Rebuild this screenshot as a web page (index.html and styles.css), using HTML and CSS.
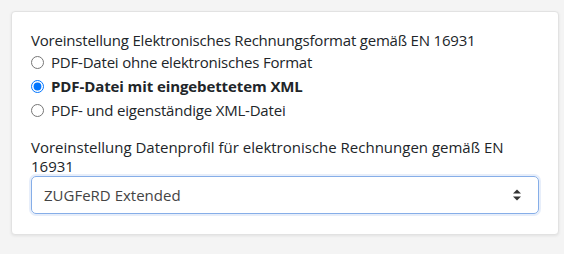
FILE: index.html
```html
<!DOCTYPE html>
<html>
<head>
   <meta http-equiv="Content-Type" content="text/html; charset=UTF-8" />
   <link rel="stylesheet" href="styles.css">
</head>
<body>

<div class="card">
    <div class="group format">
        <div class="label">Voreinstellung Elektronisches Rechnungsformat gemäß EN 16931</div>
        <label class="radio"><input type="radio" name="format"> PDF-Datei ohne elektronisches Format</label>
        <label class="radio checked"><input type="radio" name="format" checked> PDF-Datei mit eingebettetem XML</label>
        <label class="radio"><input type="radio" name="format"> PDF- und eigenständige XML-Datei</label>
    </div>

    <div class="group">
        <div class="label">Voreinstellung Datenprofil für elektronische Rechnungen gemäß EN 16931</div>
        <div class="select">
            <span>ZUGFeRD Extended</span>
            <svg width="10" height="14" viewBox="0 0 10 14">
                <path d="M1 5.5 L5 1.5 L9 5.5 Z M1 8.5 L5 12.5 L9 8.5 Z" fill="#333"/>
            </svg>
        </div>
    </div>
</div>

</body>
</html>
```

FILE: styles.css
```css
* {
    padding: 0; margin: 0;
    box-sizing: border-box;
}
body {
    background-color: #f4f4f4;
    font-family: "Open Sans", "Noto Sans", sans-serif;
    font-size: 15px;
    color: #212529;
    padding: 11px;
}
div.card {
    width: 548px;
    background-color: #fff;
    border: 1px solid #e2e2e2;
    border-radius: 4px;
    box-shadow: 0 1px 3px rgba(0, 0, 0, 0.08);
    padding: 19px 19px 20px 19px;
}
div.format {
    letter-spacing: -0.2px;
}
div.group + div.group {
    margin-top: 16px;
}
div.label {
    line-height: 19px;
}
label.radio {
    display: flex;
    align-items: center;
    height: 24px;
}
label.radio input {
    width: 13px;
    height: 13px;
    margin: 0 7px 0 0;
}
label.checked {
    font-weight: bold;
    letter-spacing: -0.1px;
}
div.select {
    display: flex;
    align-items: center;
    justify-content: space-between;
    height: 38px;
    padding: 0 16px 0 12px;
    border: 1px solid #86aee8;
    border-radius: 5px;
    box-shadow: 0 0 0 2px rgba(120, 160, 230, 0.18);
    color: #444;
}
```
